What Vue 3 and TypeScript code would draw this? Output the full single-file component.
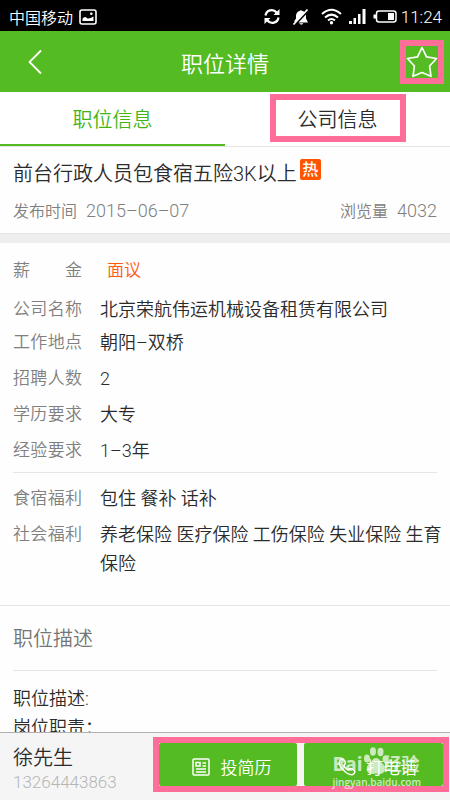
<script setup lang="ts">
import { ref } from 'vue'

interface Row {
  label: string
  value: string
  kind?: string
}

const basics: Row[] = [
  { label: '薪 金', value: '面议', kind: 'salary' },
  { label: '公司名称', value: '北京荣航伟运机械设备租赁有限公司', kind: 'company' },
  { label: '工作地点', value: '朝阳–双桥', kind: 'place' },
  { label: '招聘人数', value: '2' },
  { label: '学历要求', value: '大专' },
  { label: '经验要求', value: '1–3年' },
]

const benefits: Row[] = [
  { label: '食宿福利', value: '包住 餐补 话补' },
  { label: '社会福利', value: '养老保险 医疗保险 工伤保险 失业保险 生育保险' },
]

const tab = ref<'job' | 'company'>('job')
</script>

<template>
  <div class="screen">
    <div class="status">
      <span class="carrier">中国移动</span>
      <svg class="pic" width="18" height="16" viewBox="0 0 18 16">
        <rect x="1" y="1" width="16" height="14" rx="2" fill="none" stroke="#fff" stroke-width="1.6" />
        <path d="M3.5 12V9.5Q6 6.500 8.500 9.500Q11 10 14.500 7.500V12Z" fill="#fff" />
        <circle cx="12.300" cy="4.800" r="1.300" fill="#fff" />
      </svg>
      <span class="grow"></span>
      <svg class="sync" width="18" height="17" viewBox="0 0 18 17">
        <path d="M2.500 7.500A6.200 6.200 0 0 1 13.500 4.500M15.500 9.500A6.200 6.200 0 0 1 4.500 12.500" fill="none" stroke="#fff" stroke-width="2.200" />
        <path d="M16.500 1V7H10.500ZM1.500 16V10H7.500Z" fill="#fff" />
      </svg>
      <svg class="mute" width="17" height="18" viewBox="0 0 17 18">
        <path d="M2 13.500L4 10.500V7.500Q4.500 3.500 7.500 3Q9 1.500 10.500 3Q12 3.300 13 4.500L4 14ZM14 6.500V10.500L16 14.500H6.500ZM7 15.300H11.500Q9.500 18 7 15.300Z" fill="#fff" />
        <path d="M1.500 16.500L15.500 1.500" stroke="#fff" stroke-width="1.800" />
      </svg>
      <svg class="wifi" width="21" height="17" viewBox="0 0 21 17">
        <path d="M1 6Q10.500 -2.500 20 6M4 9.500Q10.500 3.700 17 9.500M7 12.500Q10.500 9.500 14 12.500" fill="none" stroke="#fff" stroke-width="2" />
        <circle cx="10.500" cy="14.800" r="1.700" fill="#fff" />
      </svg>
      <svg class="signal" width="17" height="15" viewBox="0 0 17 15">
        <path d="M0 12H3V15H0ZM4.500 9H7V15H4.500ZM9 5H11.500V15H9ZM13.500 0H16.500V15H13.500Z" fill="#fff" />
      </svg>
      <svg class="battery" width="24" height="13" viewBox="0 0 24 13">
        <rect x="3.500" y="1" width="19.500" height="11" rx="2.500" fill="none" stroke="#fff" stroke-width="1.500" />
        <path d="M0.500 4.500H3V8.500H0.500ZM15 3H21V10H15Z" fill="#fff" />
      </svg>
      <span class="clock">11:24</span>
    </div>

    <header class="bar">
      <button class="back" type="button" aria-label="返回">
        <svg width="14" height="26" viewBox="0 0 14 26"><path d="M13 1.500L1.500 13L13 24.500" fill="none" stroke="#fff" stroke-width="1.800" /></svg>
      </button>
      <h1>职位详情</h1>
      <button class="star" type="button" aria-label="收藏">
        <svg width="32" height="32" viewBox="0 0 32 32">
          <path d="M16 1.500L20.500 10.800L30.500 12.500L23.600 20L25 30.300L16 26.500L7 30.300L8.400 20L1.500 12.500L11.500 10.800Z" fill="none" stroke="#fff" stroke-width="1.700" stroke-linejoin="round" />
        </svg>
      </button>
    </header>

    <nav class="tabs">
      <button type="button" :class="{ on: tab === 'job' }" @click="tab = 'job'">职位信息</button>
      <button type="button" :class="{ on: tab === 'company' }" @click="tab = 'company'"><span class="mark">公司信息</span></button>
    </nav>

    <main class="content">
      <section class="intro">
        <h2>前台行政人员包食宿五险3K以上<span class="hot">热</span></h2>
        <div class="meta">
          <span>发布时间<span class="num">2015–06–07</span></span>
          <span>浏览量<span class="num">4032</span></span>
        </div>
      </section>

      <section class="details">
        <dl class="basics">
          <div v-for="r in basics" :key="r.label" class="row" :class="r.kind">
            <dt>{{ r.label }}</dt>
            <dd>{{ r.value }}</dd>
          </div>
        </dl>
        <dl class="benefits">
          <div v-for="r in benefits" :key="r.label" class="row">
            <dt>{{ r.label }}</dt>
            <dd>{{ r.value }}</dd>
          </div>
        </dl>
      </section>

      <section class="about">
        <h3>职位描述</h3>
        <p>职位描述:</p>
        <p>岗位职责：</p>
      </section>
    </main>

    <footer class="contact">
      <div class="person">
        <strong>徐先生</strong>
        <span>13264443863</span>
      </div>
      <div class="actions">
        <button type="button">
          <svg width="18" height="18" viewBox="0 0 18 18" fill="none" stroke="#fff" stroke-width="1.500">
            <rect x="1" y="1" width="16" height="16" rx="1" />
            <path d="M4 4.500H8V8H4ZM10.500 5H14M10.500 8H14M4 11H14M4 14H14" />
          </svg>
          投简历
        </button>
        <button type="button">
          <svg width="18" height="18" viewBox="0 0 18 18" fill="none" stroke="#fff" stroke-width="1.500">
            <path d="M2 2.500Q4 0 6 2Q8.500 5 6.500 6.500Q5.500 7.500 7 9.500Q9 12 10.500 11.500Q12.500 9.500 15 11.500Q18 13.500 16 15.500Q13.500 18.500 8 14.500Q-1 7 2 2.500Z" />
          </svg>
          打电话
        </button>
      </div>
      <div class="watermark">
        <div class="brand">
          <span>Bai</span>
          <svg width="26" height="28" viewBox="0 0 26 28" fill="#fff">
            <ellipse cx="4" cy="11.500" rx="3" ry="4" />
            <ellipse cx="10" cy="4.500" rx="3" ry="4.200" />
            <ellipse cx="17.500" cy="5" rx="3" ry="4.200" />
            <ellipse cx="22.500" cy="12" rx="3" ry="3.800" />
            <path d="M13 11Q16 11 18 15Q23 19 21.500 24Q20 28 13 26.500Q6 28 4 24Q2.500 19 8 15Q10 11 13 11Z" />
          </svg>
          <span>经验</span>
        </div>
        <div class="site">jingyan.baidu.com</div>
      </div>
    </footer>
  </div>
</template>

<style>
body {
  margin: 0;
  background: #fff;
}
</style>

<style scoped>
.screen {
  display: flex;
  flex-direction: column;
  height: 100vh;
  overflow: hidden;
  background: #fefefe;
  color: #2b2b2b;
  font-family: Roboto, "Noto Sans CJK SC", sans-serif;
  font-weight: 350;
  font-size: 18px;
}
h1, h2, h3, p, dl, dd {
  margin: 0;
  font-weight: inherit;
}
button {
  border: 0;
  padding: 0;
  background: none;
  color: inherit;
  font: inherit;
}
svg {
  display: block;
  flex: none;
}
.status {
  display: flex;
  align-items: center;
  flex: none;
  height: 31px;
  padding: 2px 8px 0 9px;
  box-sizing: border-box;
  background: #000;
  color: #fff;
  font-size: 16px;
}
.pic {
  margin-left: 6px;
}
.grow {
  flex: 1;
}
.mute {
  margin-left: 11px;
}
.wifi {
  margin-left: 12px;
}
.signal {
  margin-left: 7px;
}
.battery {
  margin: 0 4px 0 7px;
}
.clock {
  font-size: 17px;
}
.bar {
  display: grid;
  grid-template-columns: 1fr auto 1fr;
  align-items: center;
  flex: none;
  height: 61px;
  padding: 0 6px 0 28px;
  background: #55bb22;
  color: #fff;
}
.bar h1 {
  margin-right: 22px;
  font-size: 22px;
}
.back {
  justify-self: start;
}
.star {
  justify-self: end;
  border: 6px solid #ff6d99;
}
.tabs {
  display: flex;
  flex: none;
  height: 54px;
  border-bottom: 1px solid #e6e6e6;
  background: #fff;
}
.tabs button {
  flex: 1;
  font-size: 20px;
  border-bottom: 2px solid transparent;
}
.tabs .on {
  color: #44b415;
  border-bottom-color: #55bb22;
}
.mark {
  display: inline-block;
  padding: 5px 22px 1px;
  border: 6px solid #ff6d99;
  line-height: 30px;
}
.content {
  flex: 1;
  min-height: 0;
  overflow: hidden;
}
.intro {
  padding: 12px 13px 6px;
  border-bottom: 1px solid #e4e4e4;
}
.intro h2 {
  display: flex;
  font-size: 20px;
  line-height: 30px;
}
.hot {
  width: 21px;
  height: 21px;
  margin-left: 3px;
  border-radius: 2px;
  background: #ff5500;
  color: #fff;
  font-size: 16px;
  font-weight: 500;
  line-height: 21px;
  text-align: center;
}
.meta {
  display: flex;
  justify-content: space-between;
  margin-top: 7px;
  color: #808080;
  font-size: 16px;
  line-height: 30px;
}
.num {
  margin-left: 9px;
  font-size: 18px;
}
.details {
  border-top: 9px solid #eee;
  border-bottom: 1px solid #e6e6e6;
  padding: 0 13px;
}
.basics {
  padding: 13px 0 7px;
  border-bottom: 1px solid #e6e6e6;
}
.benefits {
  padding: 11px 0 27px;
}
.row {
  display: flex;
  gap: 18px;
  line-height: 29px;
}
.row + .row {
  margin-top: 7px;
}
.row + .company {
  margin-top: 10px;
}
.row + .place {
  margin-top: 4px;
}
.row dt {
  flex: none;
  width: 69px;
  color: #808080;
  font-size: 17px;
  text-align-last: justify;
}
.row dd {
  flex: 1;
  margin-right: -8px;
}
.salary dd {
  padding-left: 7px;
  color: #ff5a12;
  font-size: 17px;
}
.about {
  padding: 0 13px;
}
.about h3 {
  margin-bottom: 13px;
  padding-top: 2px;
  border-bottom: 1px solid #e6e6e6;
  color: #757575;
  font-size: 20px;
  line-height: 62px;
}
.about p {
  line-height: 29px;
}
.contact {
  position: relative;
  display: flex;
  align-items: flex-start;
  justify-content: space-between;
  flex: none;
  height: 67px;
  padding: 0 1px 0 13px;
  border-top: 1px solid #b0b0b0;
  background: #f5f5f5;
}
.person {
  display: flex;
  flex-direction: column;
  padding-top: 10px;
}
.person strong {
  font-size: 20px;
  font-weight: inherit;
  line-height: 30px;
}
.person span {
  color: #b5b5b5;
  font-size: 17px;
  line-height: 18px;
}
.actions {
  display: grid;
  grid-template-columns: 1fr 1fr;
  gap: 7px;
  flex: none;
  width: 68%;
  height: 55px;
  margin-top: 4px;
  box-sizing: border-box;
  border: 6px solid #ff6d99;
}
.actions button {
  display: flex;
  align-items: center;
  justify-content: center;
  gap: 10px;
  padding: 4px 0 0 8px;
  border-radius: 2px;
  background: #55bb22;
  color: #fff;
  font-size: 17px;
}
.watermark {
  position: absolute;
  right: 29px;
  bottom: 11px;
  color: #fff;
  opacity: 0.7;
}
.brand {
  display: flex;
  align-items: flex-end;
  font-family: "Open Sans", "Noto Sans CJK SC", sans-serif;
  font-size: 19px;
  font-weight: 700;
  line-height: 22px;
}
.brand span:last-child {
  margin-left: -5px;
  font-size: 18px;
}
.site {
  font-family: "Open Sans", sans-serif;
  font-weight: 600;
  font-size: 10px;
  line-height: 14px;
}
</style>
